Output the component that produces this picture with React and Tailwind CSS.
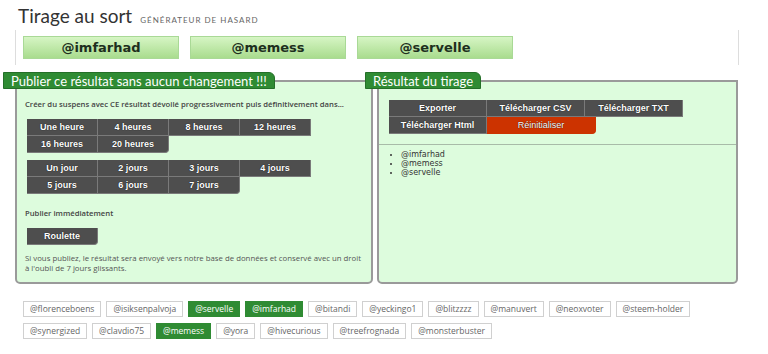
const winners = ["@imfarhad", "@memess", "@servelle"];

const hours = ["Une heure", "4 heures", "8 heures", "12 heures", "16 heures", "20 heures"];
const days = ["Un jour", "2 jours", "3 jours", "4 jours", "5 jours", "6 jours", "7 jours"];

const tagRows = [
  [
    ["@florenceboens", false],
    ["@isiksenpalvoja", false],
    ["@servelle", true],
    ["@imfarhad", true],
    ["@bitandi", false],
    ["@yeckingo1", false],
    ["@blitzzzz", false],
    ["@manuvert", false],
    ["@neoxvoter", false],
    ["@steem-holder", false],
  ],
  [
    ["@synergized", false],
    ["@clavdio75", false],
    ["@memess", true],
    ["@yora", false],
    ["@hivecurious", false],
    ["@treefrognada", false],
    ["@monsterbuster", false],
  ],
];

function DarkButton({ label, last, className = "" }) {
  return (
    <button
      className={`h-[17px] bg-[#4e4e4e] text-white text-[9px] font-bold leading-[17px] border-r border-b border-[#7a7a7a] [text-shadow:0_0_1px_#000] ${last ? "rounded-br-[4px]" : ""} ${className}`}
      style={{ fontFamily: '"Liberation Sans", Arial, sans-serif' }}
    >
      {label}
    </button>
  );
}

function Tab({ children }) {
  return (
    <div
      className="relative z-10 -ml-[12px] -mb-[9px] self-start h-[17px] px-[7px] bg-[#2f8b33] text-white text-[13px] leading-[16px] rounded-tr-[6px] border border-[#246f28]"
      style={{ fontFamily: 'Lato, "Noto Sans", sans-serif' }}
    >
      {children}
    </div>
  );
}

export default function App() {
  return (
    <main className="w-[768px] h-[354px] bg-white overflow-hidden" style={{ fontFamily: '"Open Sans", sans-serif' }}>
      {/* Header */}
      <header className="flex items-baseline gap-[8px] pl-[18px] pt-[2px] h-[30px]">
        <h1 className="text-[19px] text-[#333]" style={{ fontFamily: 'Lato, "Noto Sans", sans-serif' }}>
          Tirage au sort
        </h1>
        <span className="text-[8px] uppercase tracking-[1px] text-[#666]" style={{ fontFamily: 'Lato, sans-serif' }}>
          Générateur de hasard
        </span>
      </header>

      {/* Winners */}
      <section className="mx-[15px] w-[724px] h-[35px] border-l border-r border-[#dddddd] flex items-center gap-[11px] pl-[7px]">
        {winners.map((w) => (
          <div
            key={w}
            className="w-[156px] h-[23px] flex items-center justify-center border border-[#a9d996] bg-gradient-to-b from-[#d6f5c4] to-[#a9dc8e] text-[13px] font-bold text-[#1d2f1d]"
            style={{ fontFamily: 'Verdana, "DejaVu Sans", sans-serif' }}
          >
            {w}
          </div>
        ))}
      </section>

      {/* Panels */}
      <section className="flex gap-[4px] pl-[15px] mt-[7px]">
        {/* Left */}
        <div className="w-[358px] flex flex-col">
          <Tab>Publier ce résultat sans aucun changement !!!</Tab>
          <div className="h-[204px] bg-[#ddfcdd] border-2 border-[#9a9a9a] rounded-b-[5px] pt-[17px] pl-[8px] pr-[1px] text-[#444]">
            <p className="text-[7.7px] font-semibold leading-[10px]">
              Créer du suspens avec CE résultat dévoilé progressivement puis définitivement dans...
            </p>
            <div className="mt-[10px] ml-[2px] grid grid-cols-[71px_71px_71px_71px]">
              {hours.map((h, i) => (
                <DarkButton key={h} label={h} last={i === hours.length - 1} />
              ))}
            </div>
            <div className="mt-[7px] ml-[2px] grid grid-cols-[71px_71px_71px_71px]">
              {days.map((d, i) => (
                <DarkButton key={d} label={d} last={i === days.length - 1} />
              ))}
            </div>
            <p className="mt-[14px] text-[7.7px] font-semibold leading-[10px]">Publier immédiatement</p>
            <div className="mt-[10px] ml-[2px] grid grid-cols-[71px]">
              <DarkButton label="Roulette" last />
            </div>
            <p className="mt-[8px] text-[7.8px] leading-[10px] text-[#555]">
              Si vous publiez, le résultat sera envoyé vers notre base de données et conservé avec un droit
              <br />à l'oubli de 7 jours glissants.
            </p>
          </div>
        </div>

        {/* Right */}
        <div className="w-[361px] flex flex-col">
          <Tab>Résultat du tirage</Tab>
          <div className="h-[204px] bg-[#ddfcdd] border-2 border-[#9a9a9a] rounded-b-[5px]">
            <div className="pt-[18px] pl-[10px] pb-[10px] border-b border-[#a8bba8]">
              <div className="grid grid-cols-[98px_98px_98px]">
                <DarkButton label="Exporter" />
                <DarkButton label="Télécharger CSV" />
                <DarkButton label="Télécharger TXT" />
                <DarkButton label="Télécharger Html" />
                <DarkButton label="Réinitialiser" last className="w-[109px] bg-[#cc3300] border-[#cc3300] font-normal" />
              </div>
            </div>
            <ul
              className="list-disc pl-[22px] pt-[5px] text-[8px] leading-[9px] text-[#333]"
              style={{ fontFamily: 'Verdana, "DejaVu Sans", sans-serif' }}
            >
              {winners.map((w) => (
                <li key={w}>{w}</li>
              ))}
            </ul>
          </div>
        </div>
      </section>

      {/* Participants */}
      <section className="flex flex-col gap-[6px] pl-[23px] mt-[17px]">
        {tagRows.map((row, r) => (
          <div key={r} className="flex gap-[5px]">
            {row.map(([t, won]) => (
              <span
                key={t}
                className={`h-[16px] px-[6px] text-[8.5px] leading-[14px] border ${
                  won ? "bg-[#2f8b33] border-[#2f8b33] text-white" : "bg-white border-[#d0d0d0] text-[#666]"
                }`}
              >
                {t}
              </span>
            ))}
          </div>
        ))}
      </section>
    </main>
  );
}
